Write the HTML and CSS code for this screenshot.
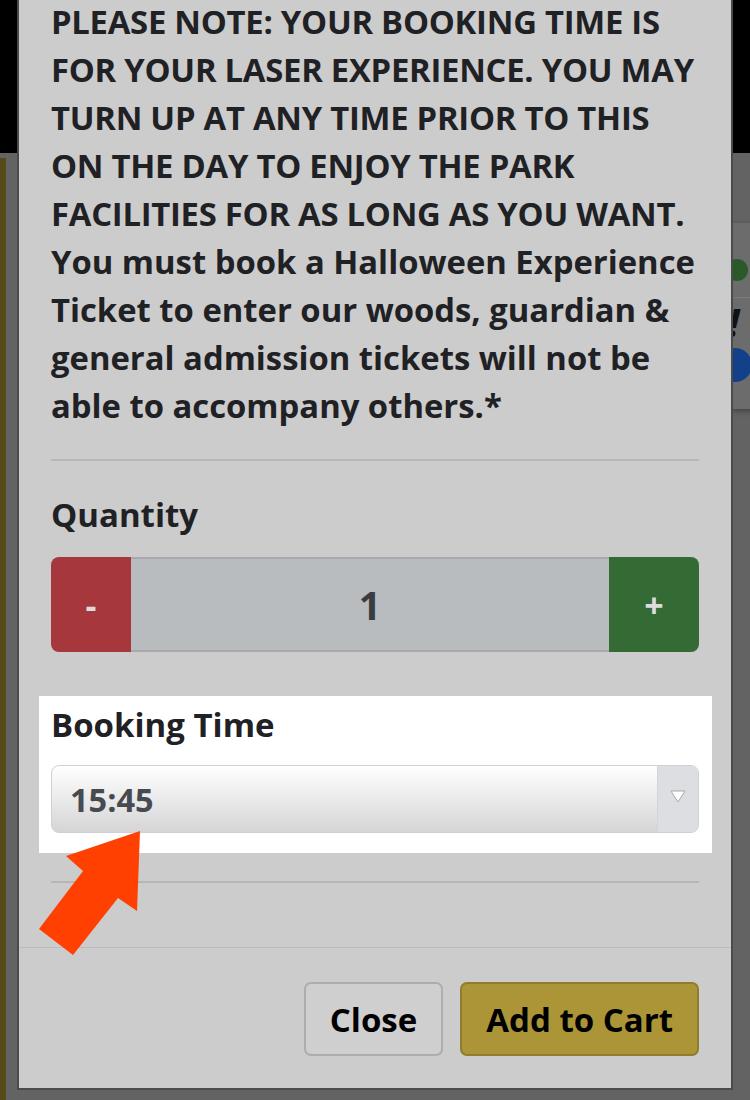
FILE: index.html
```html
<!DOCTYPE html>
<html lang="en">
<head>
<meta charset="utf-8">
<title>Booking</title>
<link rel="stylesheet" href="styles.css">
</head>
<body>
<div class="page">
  <header class="topbar"></header>
  <div class="content">
    <div class="gold-strip"></div>
    <div class="side-card">
      <span class="dot dot-green"></span>
      <span class="card-rule"></span>
      <span class="bang">!</span>
      <span class="dot dot-blue"></span>
    </div>
  </div>
</div>

<div class="modal">
  <div class="modal-body">
    <p class="notice"><span class="caps">PLEASE NOTE: YOUR BOOKING TIME IS FOR YOUR LASER EXPERIENCE. YOU MAY TURN UP AT ANY TIME PRIOR TO THIS ON THE DAY TO ENJOY THE PARK FACILITIES FOR AS LONG AS YOU WANT.</span> You must book a Halloween Experience Ticket to enter our woods, guardian &amp; general admission tickets will not be able to accompany others.*</p>
    <hr class="rule rule-top">
    <label class="field-label qty-label">Quantity</label>
    <div class="qty">
      <button class="qty-btn qty-minus">-</button>
      <div class="qty-value">1</div>
      <button class="qty-btn qty-plus">+</button>
    </div>
    <div class="highlight">
      <label class="field-label">Booking Time</label>
      <div class="select">
        <span class="select-value">15:45</span>
        <span class="select-arrow">
          <svg width="16" height="13" viewBox="0 0 16 13"><path d="M1 1 H15 L8 12 Z" fill="#ffffff" stroke="#a7a9ad" stroke-width="1"/></svg>
        </span>
      </div>
    </div>
    <hr class="rule rule-bottom">
  </div>
  <div class="modal-footer">
    <button class="btn btn-close">Close</button>
    <button class="btn btn-cart">Add to Cart</button>
  </div>
</div>

<svg class="pointer" width="750" height="1100" viewBox="0 0 750 1100">
  <polygon points="140,831 66,856 83,871 39,929 73,955 118,898 137,911" fill="#ff4000"/>
</svg>
</body>
</html>
```

FILE: styles.css
```css
html, body {
  margin: 0;
  padding: 0;
}
body {
  width: 750px;
  height: 1100px;
  overflow: hidden;
  background: #636363;
  font-family: "Open Sans", "Liberation Sans", sans-serif;
  position: relative;
}
.page {
  display: flex;
  flex-direction: column;
  height: 1100px;
}
.topbar {
  height: 153px;
  background: #000;
  flex: none;
}
.content {
  flex: 1;
  display: flex;
  justify-content: space-between;
  align-items: flex-start;
}
.gold-strip {
  width: 6px;
  height: 942px;
  margin-top: 5px;
  background: #564a1b;
}
.side-card {
  width: 40px;
  margin-top: 70px;
  margin-right: -22px;
  height: 186px;
  background: #6c6c6c;
  box-shadow: 0 2px 6px rgba(0,0,0,0.35);
  display: flex;
  flex-direction: column;
  align-items: flex-start;
}
.dot {
  display: block;
  border-radius: 50%;
}
.dot-green {
  width: 22px;
  height: 22px;
  background: #2b5a2a;
  margin: 36px 0 0 -6px;
}
.card-rule {
  display: block;
  width: 20px;
  height: 1px;
  background: #7a7a7a;
  margin-top: 16px;
}
.bang {
  font: italic 700 40px/44px "Open Sans", sans-serif;
  color: #111;
  margin: 2px 0 0 -4px;
}
.dot-blue {
  width: 34px;
  height: 34px;
  background: #12408a;
  margin: 4px 0 0 -14px;
}

.modal {
  position: absolute;
  left: 17px;
  top: -20px;
  width: 712px;
  background: #cccccc;
  border: 2px solid #4b4b4b;
  color: #1f2125;
}
.modal-body {
  padding: 16px 32px 64px 32px;
  display: flex;
  flex-direction: column;
}
.notice {
  margin: 0;
  font-size: 32.8px;
  line-height: 48px;
  font-weight: 700;
}
.caps {
  letter-spacing: -0.25px;
}
.rule {
  border: 0;
  height: 2px;
  background: #b6b6b6;
  margin: 0;
}
.rule-top {
  margin-top: 29px;
}
.field-label {
  display: block;
  font-size: 33px;
  line-height: 40px;
  font-weight: 700;
  color: #1f2125;
}
.qty-label {
  margin-top: 34px;
}
.qty {
  margin-top: 22px;
  display: flex;
  height: 95px;
  border-radius: 8px;
  overflow: hidden;
}
.qty-btn {
  border: 0;
  padding: 0;
  margin: 0;
  color: #dcdcdc;
  font-family: "Open Sans", sans-serif;
  font-weight: 700;
  font-size: 34px;
  flex: none;
}
.qty-minus {
  width: 80px;
  background: #a6373d;
}
.qty-plus {
  width: 90px;
  background: #346a33;
}
.qty-value {
  flex: 1;
  display: flex;
  align-items: center;
  justify-content: center;
  background: #b9bcbf;
  border-top: 2px solid #a7a9ae;
  border-bottom: 2px solid #a7a9ae;
  font-size: 39px;
  font-weight: 700;
  color: #393c41;
}
.highlight {
  margin: 44px -13px 0 -12px;
  padding: 9px 13px 20px 12px;
  background: #ffffff;
}
.select {
  margin-top: 20px;
  height: 66px;
  display: flex;
  border: 1px solid #cfd0d5;
  border-radius: 8px;
  overflow: hidden;
  background: linear-gradient(#ffffff, #d5d5d5);
}
.select-value {
  flex: 1;
  display: flex;
  align-items: center;
  padding-left: 18px;
  font-size: 32.5px;
  font-weight: 700;
  color: #474a50;
}
.select-arrow {
  width: 40px;
  background: #dcdee1;
  border-left: 1px solid #d3d4d8;
  display: flex;
  justify-content: center;
  align-items: flex-start;
  padding-top: 24px;
}
.rule-bottom {
  margin-top: 28px;
}
.modal-footer {
  border-top: 1px solid #bcbcbc;
  padding: 34px 32px 32px 32px;
  display: flex;
  justify-content: flex-end;
  gap: 17px;
}
.btn {
  height: 74px;
  padding: 0 24px;
  border-radius: 7px;
  font-family: "Open Sans", sans-serif;
  font-weight: 700;
  font-size: 33px;
  color: #000;
}
.btn-close {
  background: #cfcfcf;
  border: 2px solid #adadad;
}
.btn-cart {
  background: #ab9536;
  border: 2px solid #8f7d2d;
}
.pointer {
  position: absolute;
  left: 0;
  top: 0;
  pointer-events: none;
}
```
